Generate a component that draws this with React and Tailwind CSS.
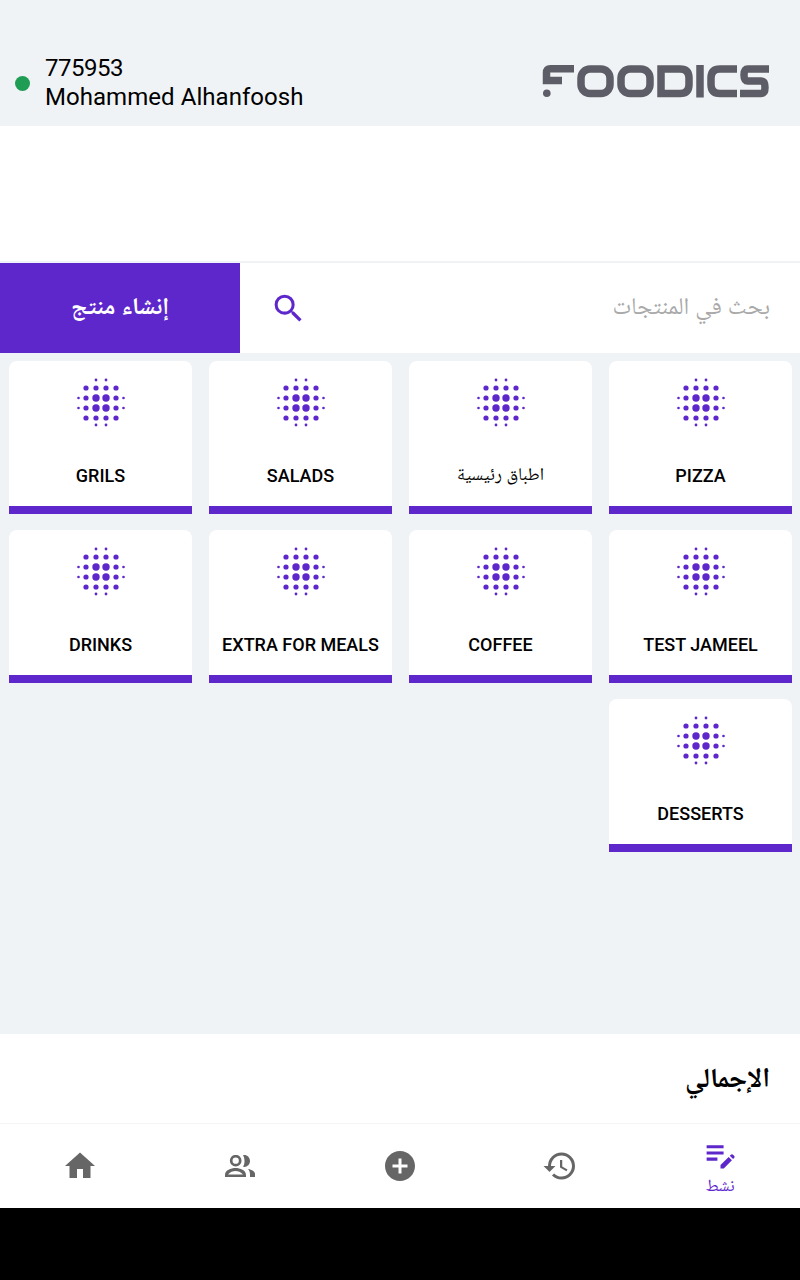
import React from "react";
import { MdHome, MdAddCircle, MdHistory, MdEditNote, MdSearch } from "react-icons/md";

const rows = [380, 388, 398, 408, 418, 425];

function Dots() {
  const dots = [];
  const add = (x, y, r) => dots.push(<circle key={x + "-" + y} cx={x - 676} cy={y - 378} r={r} />);
  [rows[0], rows[5]].forEach((y) => [696, 706].forEach((x) => add(x, y, 1.4)));
  [rows[1], rows[4]].forEach((y) => [686, 696, 706, 716].forEach((x) => add(x, y, 2.6)));
  [rows[2], rows[3]].forEach((y) => {
    add(678.500, y, 1.3);
    add(686, y, 2.6);
    add(696, y, 3.7);
    add(706, y, 3.7);
    add(716, y, 2.6);
    add(723.500, y, 1.3);
  });
  return (
    <svg width="50" height="50" viewBox="0 0 50 50" fill="#5e27cc">
      {dots}
    </svg>
  );
}

function Logo() {
  return (
    <svg width="228" height="33" viewBox="0 0 228 33" fill="none" stroke="#5c5d66" strokeWidth="7.500">
      <path d="M32 3.750H8.500Q4.500 3.750 4.500 8V15.500H20" />
      <circle cx="4.800" cy="28.300" r="3.800" fill="#5c5d66" stroke="none" />
      <rect x="39" y="4" width="29" height="24.500" rx="9" />
      <rect x="79" y="4" width="29" height="24.500" rx="9" />
      <path d="M119 4H138Q147 4 147 13V19.500Q147 28.500 138 28.500H119Z" />
      <path d="M158 0V32.500" />
      <path d="M195 4H178Q169 4 169 13V19.500Q169 28.500 178 28.500H195" />
      <path d="M227 4H206Q202 4 202 10Q202 16 206 16H219Q223 16 223 22.500Q223 28.500 219 28.500H198" />
    </svg>
  );
}

function PeopleIcon() {
  return (
    <svg width="30" height="22" viewBox="0 0 30 22" fill="#666666">
      <circle cx="10.700" cy="5.700" r="4.500" fill="none" stroke="#666666" strokeWidth="2.700" />
      <path d="M18 0.200C22 -0.500 25 2.500 25 6C25 9.500 22 12.500 18 11.800C20 9 20 3 18 0.200Z" />
      <path
        fillRule="evenodd"
        d="M0 22V20C0 15 6 13 10.500 13C15 13 21 15 21 20V22ZM3 19.500H18C16 17 13 16 10.500 16C8 16 5 17 3 19.500Z"
      />
      <path d="M23 14C27 14.500 30 16.500 30 19V22H25V19.500C25 17.500 24.500 15.500 23 14Z" />
    </svg>
  );
}

function Card({ label, arabic }) {
  return (
    <div className="w-[183px] h-[153px] bg-white rounded-t-lg border-b-8 border-[#5e27cc] flex flex-col items-center">
      <div className="mt-[17px]">
        <Dots />
      </div>
      <div
        className={
          "h-[24px] leading-[24px] text-black whitespace-nowrap text-[18px] " +
          (arabic ? "mt-[34px] font-normal" : "mt-[36px] font-medium")
        }
      >
        {label}
      </div>
    </div>
  );
}

function NavItem({ children }) {
  return <div className="flex-1 flex flex-col items-center justify-center text-[#666666]">{children}</div>;
}

export default function App() {
  const font = {
    fontFamily: "Roboto, 'Noto Naskh Arabic', 'Noto Sans Arabic', 'Noto Sans', 'DejaVu Sans', sans-serif",
  };
  return (
    <div className="w-[800px] h-[1280px] flex flex-col bg-[#f0f3f6] overflow-hidden" style={font}>
      <header className="h-[126px] shrink-0 bg-[#f0f3f6] flex items-end justify-between pb-[14px] pl-[15px] pr-[30px]">
        <div className="flex items-center gap-[15px]">
          <div className="w-[15px] h-[15px] rounded-full bg-[#1f9d55]" />
          <div className="text-[24px] leading-[29px] text-black">
            <div className="tracking-[-0.5px]">775953</div>
            <div className="tracking-[0.05px]">Mohammed Alhanfoosh</div>
          </div>
        </div>
        <div className="mb-[14px]">
          <Logo />
        </div>
      </header>

      <div className="h-[135px] shrink-0 bg-white" />

      <div className="h-[92px] shrink-0 bg-white border-t-2 border-[#f0f3f6] flex">
        <button
          className="w-[240px] h-full bg-[#5e27cc] text-white text-[24px] font-bold flex items-center justify-center pb-[4px]"
          dir="rtl"
        >
          إنشاء منتج
        </button>
        <div className="flex-1 flex items-center justify-between pl-[30px] pr-[30px]">
          <MdSearch size={37} className="text-[#5e27cc]" />
          <div className="text-[24px] text-[#a9a9a9] pb-[4px]" dir="rtl">
            بحث في المنتجات
          </div>
        </div>
      </div>

      <main className="flex-1 pt-[8px] pr-[8px] pl-[9px]">
        <div dir="rtl" className="flex flex-wrap gap-x-[17px] gap-y-[16px]">
          <Card label="PIZZA" />
          <Card label="اطباق رئيسية" arabic />
          <Card label="SALADS" />
          <Card label="GRILS" />
          <Card label="TEST JAMEEL" />
          <Card label="COFFEE" />
          <Card label="EXTRA FOR MEALS" />
          <Card label="DRINKS" />
          <Card label="DESSERTS" />
        </div>
      </main>

      <div className="h-[89px] shrink-0 bg-white flex items-center justify-end pr-[30px] pb-[2px]">
        <div dir="rtl" className="text-[27.500px] font-bold text-black">
          الإجمالي
        </div>
      </div>

      <nav className="h-[85px] shrink-0 bg-white border-t border-[#f5f5f5] flex">
        <NavItem>
          <MdHome size={36} />
        </NavItem>
        <NavItem>
          <PeopleIcon />
        </NavItem>
        <NavItem>
          <MdAddCircle size={36} />
        </NavItem>
        <NavItem>
          <MdHistory size={36} />
        </NavItem>
        <div className="flex-1 flex flex-col items-center pt-[12px] text-[#5e27cc]">
          <MdEditNote size={37} />
          <div className="text-[17px] font-normal leading-[16px] mt-[4px]">نشط</div>
        </div>
      </nav>

      <div className="h-[72px] shrink-0 bg-black" />
    </div>
  );
}
